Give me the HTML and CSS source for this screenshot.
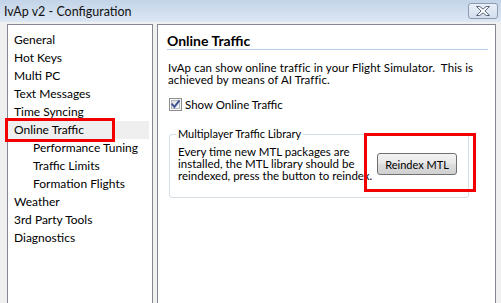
FILE: index.html
```html
<!DOCTYPE html>
<html>
<head>
<meta charset="utf-8">
<title>IvAp v2 - Configuration</title>
<link rel="stylesheet" href="styles.css">
</head>
<body>
<div class="window">
  <div class="titlebar">
    <span class="title">IvAp v2 - Configuration</span>
    <button class="close" aria-label="Close">
      <svg width="14" height="10" viewBox="0 0 14 10">
        <polygon points="0.5,0.5 3.8,0.5 7,3.1 10.2,0.5 13.5,0.5 8.9,5 13.5,9.5 10.2,9.5 7,6.9 3.8,9.5 0.5,9.5 5.1,5" fill="#ffffff" stroke="#56657a" stroke-width="1" stroke-linejoin="round"/>
      </svg>
    </button>
  </div>
  <div class="client">
    <ul class="nav">
      <li>General</li>
      <li>Hot Keys</li>
      <li>Multi PC</li>
      <li>Text Messages</li>
      <li>Time Syncing</li>
      <li class="selected">Online Traffic<span class="mark mark-nav"></span></li>
      <li class="sub">Performance Tuning</li>
      <li class="sub">Traffic Limits</li>
      <li class="sub">Formation Flights</li>
      <li>Weather</li>
      <li>3rd Party Tools</li>
      <li>Diagnostics</li>
    </ul>
    <div class="page">
      <h1 class="heading">Online Traffic</h1>
      <p class="intro">IvAp can show online traffic in your Flight Simulator.&nbsp; This is<br>achieved by means of AI Traffic.</p>
      <label class="check">
        <span class="box">
          <svg width="13" height="13" viewBox="0 0 13 13">
            <defs>
              <linearGradient id="cb" x1="0" y1="0" x2="1" y2="1">
                <stop offset="0" stop-color="#dcdcdc"/>
                <stop offset="1" stop-color="#fbfbfb"/>
              </linearGradient>
            </defs>
            <rect x="0.5" y="0.5" width="12" height="12" fill="#f6f6f6" stroke="#8e8f8f"/>
            <rect x="2.5" y="2.5" width="8" height="8" fill="url(#cb)" stroke="#b8bcc2"/>
            <path d="M3.2 6.4 L5.4 8.9 L9.9 3.2" fill="none" stroke="#3f5396" stroke-width="1.9" stroke-linecap="square"/>
          </svg>
        </span>
        Show Online Traffic
      </label>
      <fieldset class="group">
        <legend>Multiplayer Traffic Library</legend>
        <div class="group-body">
          <p class="group-text">Every time new MTL packages are<br>installed, the MTL library should be<br>reindexed, press the button to reindex.</p>
          <div class="btn-wrap">
            <button class="btn">Reindex MTL</button>
            <span class="mark mark-btn"></span>
          </div>
        </div>
      </fieldset>
    </div>
  </div>
</div>
</body>
</html>
```
FILE: styles.css
```css
* {
  box-sizing: border-box;
}

html, body {
  margin: 0;
  padding: 0;
}

body {
  width: 501px;
  height: 303px;
  overflow: hidden;
  background: #f0f0f0;
  font-family: Lato, "Noto Sans", sans-serif;
  font-size: 12px;
  color: #000;
}

.window {
  width: 501px;
  height: 303px;
  overflow: hidden;
}

.titlebar {
  height: 22px;
  display: flex;
  align-items: center;
  padding: 0 3px 0 4px;
  background: linear-gradient(#c3d4e8, #dce7f3);
}

.title {
  flex: 1;
  font-size: 12.5px;
  color: #111;
}

.close {
  width: 30px;
  height: 16px;
  margin-top: -1px;
  padding: 0;
  border: 1px solid #8c9bb0;
  border-radius: 3px;
  background: linear-gradient(#e9f0f8, #d3deec);
  display: flex;
  align-items: center;
  justify-content: center;
}

.client {
  display: flex;
  gap: 4px;
  padding: 2px 0 0 7px;
}

.nav {
  width: 146px;
  height: 300px;
  flex: none;
  margin: 0;
  padding: 6px 0 0 0;
  list-style: none;
  background: #fff;
  border: 1px solid #828790;
}

.nav li {
  position: relative;
  height: 18px;
  line-height: 18px;
  margin-right: 3px;
  padding-left: 6px;
  white-space: nowrap;
}

.nav li.sub {
  padding-left: 25px;
}

.nav li.selected {
  background: #efefef;
}

.mark {
  position: absolute;
  border: 3px solid #f20000;
  pointer-events: none;
}

.mark-nav {
  left: -3px;
  top: -3px;
  width: 110px;
  height: 24px;
}

.page {
  width: 339px;
  height: 300px;
  flex: none;
  background: #fff;
  border: 1px solid #828790;
  padding: 8px 7px 0 9px;
  font-size: 11.5px;
}

.heading {
  margin: 0;
  height: 17px;
  line-height: 16px;
  font-size: 14px;
  font-weight: bold;
  border-bottom: 1px solid #b2cbe7;
}

.intro {
  margin: 12px 0 0 1px;
  line-height: 12px;
  letter-spacing: 0.1px;
  white-space: nowrap;
}

.check {
  display: flex;
  align-items: center;
  gap: 3px;
  height: 13px;
  margin: 12px 0 0 2px;
}

.box {
  display: flex;
  width: 13px;
  height: 13px;
}

.group {
  width: 300px;
  margin: 17px 0 0 2px;
  padding: 0 8px 15px 8px;
  border: 1px solid #d5dfe5;
  border-radius: 3px;
  min-width: 0;
}

.group legend {
  padding: 0 2px;
  margin-left: -2px;
  line-height: 12px;
  font-size: 11px;
}

.group-body {
  display: flex;
  align-items: center;
  padding-top: 6px;
}

.group-text {
  width: 199px;
  flex: none;
  margin: 0;
  line-height: 12px;
  white-space: nowrap;
}

.btn-wrap {
  position: relative;
  flex: none;
}

.btn {
  display: block;
  width: 80px;
  height: 22px;
  padding: 0;
  border: 1px solid #707070;
  border-radius: 3px;
  background: linear-gradient(#f3f3f3, #e8e8e8 45%, #dcdcdc 55%, #d0d0d0);
  font-family: inherit;
  font-size: 11px;
  color: #000;
}

.mark-btn {
  left: -13px;
  top: -20px;
  width: 112px;
  height: 59px;
}
```
